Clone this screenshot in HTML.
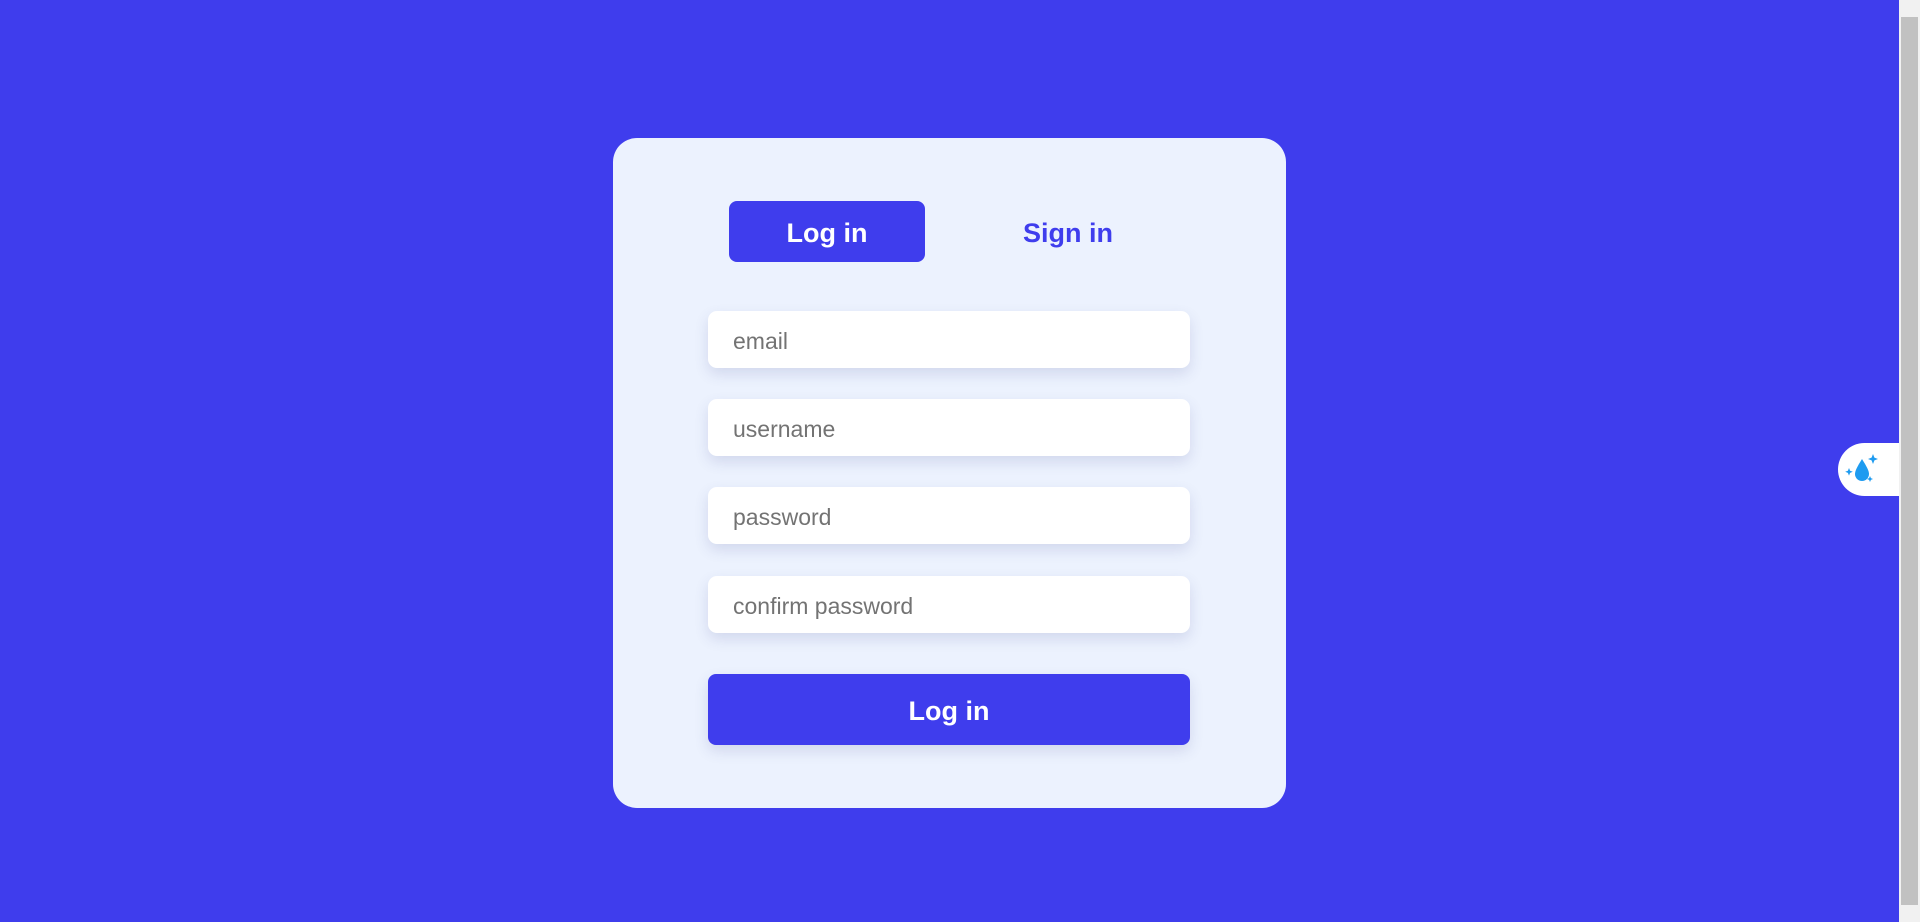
<!DOCTYPE html>
<html><head><style>
html,body{margin:0;padding:0}
body{width:1920px;height:922px;background:#3f3ded;position:relative;overflow:hidden;font-family:"Segoe UI","Liberation Sans",sans-serif}
.card{position:absolute;left:613px;top:138px;width:673px;height:670px;background:#ecf2fe;border-radius:24px}
.tab{position:absolute;top:201px;height:61px;width:196px;border-radius:8px;font-size:27px;font-weight:600;line-height:64px;text-align:center}
.t1{left:729px;background:#3f3ded;color:#fff}
.t2{left:970px;color:#3f3ded}
.inp{position:absolute;left:708px;width:482px;height:57px;background:#fff;border-radius:9px;box-shadow:0 6px 14px rgba(60,70,140,.15);font-size:23px;color:#737373;line-height:60px;padding-left:25px;box-sizing:border-box}
.btn{position:absolute;left:708px;top:674px;width:482px;height:71px;background:#3f3ded;border-radius:8px;color:#fff;font-size:27px;font-weight:600;text-align:center;line-height:74px;box-shadow:0 6px 14px rgba(60,70,140,.15)}
.sb{position:absolute;right:0;top:0;width:21px;height:922px;background:#f1f1f1}
.th{position:absolute;right:2px;top:17px;width:17px;height:888px;background:#c1c1c1}
.w{position:absolute;left:1838px;top:443px;width:61px;height:53px;background:#fff;border-radius:27px 0 0 27px}
</style></head><body>
<div class="card"></div>
<div class="tab t1">Log in</div>
<div class="tab t2">Sign in</div>
<div class="inp" style="top:311px">email</div>
<div class="inp" style="top:399px">username</div>
<div class="inp" style="top:487px">password</div>
<div class="inp" style="top:576px">confirm password</div>
<div class="btn">Log in</div>
<div class="w"><svg width="61" height="53" viewBox="0 0 61 53">
<path d="M24 16 C19 24 17 28 17 31 A7 7 0 0 0 31 31 C31 28 29 24 24 16Z" fill="#1e9bf0"/>
<path d="M35 11 l1.4 3.6 3.6 1.4 -3.6 1.4 -1.4 3.6 -1.4 -3.6 -3.6 -1.4 3.6 -1.4z" fill="#1e9bf0"/>
<path d="M11 25 l1.1 2.7 2.7 1.1 -2.7 1.1 -1.1 2.7 -1.1 -2.7 -2.7 -1.1 2.7 -1.1z" fill="#1e9bf0"/>
<path d="M32 33 l.9 2.1 2.1 .9 -2.1 .9 -.9 2.1 -.9 -2.1 -2.1 -.9 2.1 -.9z" fill="#1e9bf0"/>
</svg></div>
<div class="sb"><div class="th"></div></div>
</body></html>
